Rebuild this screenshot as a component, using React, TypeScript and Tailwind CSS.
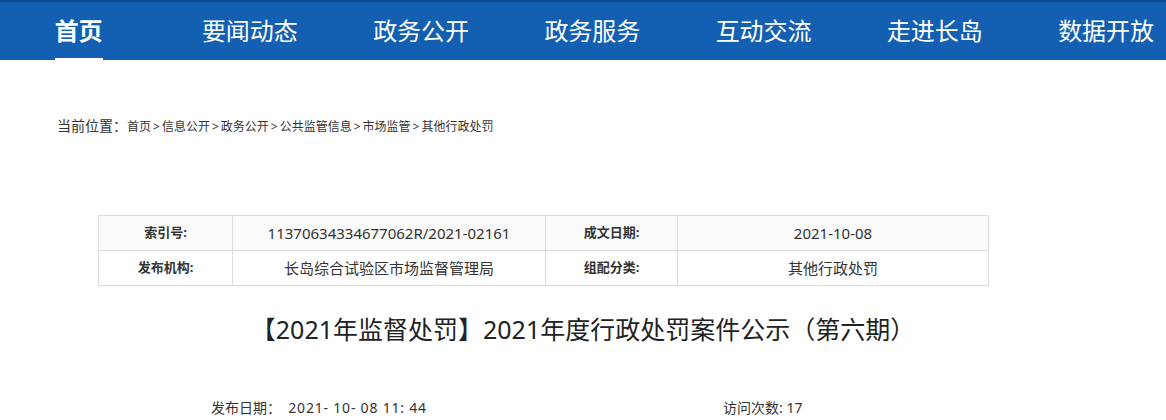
import React from 'react';

const navItems = ['首页', '要闻动态', '政务公开', '政务服务', '互动交流', '走进长岛', '数据开放'];
const crumbs = ['首页', '信息公开', '政务公开', '公共监管信息', '市场监管', '其他行政处罚'];

const font = { fontFamily: '"Noto Sans", "Noto Sans CJK SC", sans-serif' };

const InfoTable: React.FC = () => {
  const rows = [
    ['索引号:', '11370634334677062R/2021-02161', '成文日期:', '2021-10-08'],
    ['发布机构:', '长岛综合试验区市场监督管理局', '组配分类:', '其他行政处罚'],
  ];
  return (
    <div className="ml-[98px] mt-[79px] w-[891px] border-l border-t border-[#dddddd]">
      {rows.map((row, i) => (
        <div key={i} className={`grid grid-cols-[134px_313px_132px_311px] ${i === 0 ? 'bg-[#fafafa]' : 'bg-white'}`}>
          {row.map((cell, j) => (
            <div
              key={j}
              className={`flex h-[35px] items-center justify-center border-b border-r border-[#dddddd] text-[#333] ${
                j % 2 === 0 ? 'text-[13px] font-bold' : 'text-[15px]'
              }`}
            >
              {cell}
            </div>
          ))}
        </div>
      ))}
    </div>
  );
};

export default function App() {
  return (
    <div className="h-[420px] w-full overflow-hidden bg-white" style={font}>
      <nav className="h-[60px] overflow-hidden border-t-2 border-[#0c4a93] bg-[#135fb1]">
        <ul className="-ml-[7px] flex h-full">
          {navItems.map((item, i) => (
            <li key={item} className="flex h-full w-[171.25px] shrink-0 justify-center">
              <span
                className={`relative flex h-full items-center text-[24px] leading-none text-white ${
                  i === 0 ? 'font-bold' : ''
                }`}
              >
                {item}
                {i === 0 && <span className="absolute bottom-0 left-0 h-[2px] w-full bg-white" />}
              </span>
            </li>
          ))}
        </ul>
      </nav>

      <div className="ml-[57px] mt-[56px] flex h-5 items-baseline leading-5 text-[#333]">
        <span className="text-[14px]">当前位置：</span>
        <span className="text-[12px]">
          {crumbs.map((c, i) => (
            <React.Fragment key={c}>
              {i > 0 && <span className="mx-[2px]">&gt;</span>}
              {c}
            </React.Fragment>
          ))}
        </span>
      </div>

      <InfoTable />

      <h1 className="mt-[27px] text-center text-[25px] leading-8 text-[#222]">
        【2021年监督处罚】2021年度行政处罚案件公示（第六期）
      </h1>

      <div className="mt-[52px] flex h-5 items-center text-[14px] text-[#333]">
        <span className="ml-[211px] w-[512px]">
          发布日期：&nbsp;&nbsp;<span className="tracking-[0.8px]">2021- 10- 08 11: 44</span>
        </span>
        <span>访问次数: 17</span>
      </div>
    </div>
  );
}
